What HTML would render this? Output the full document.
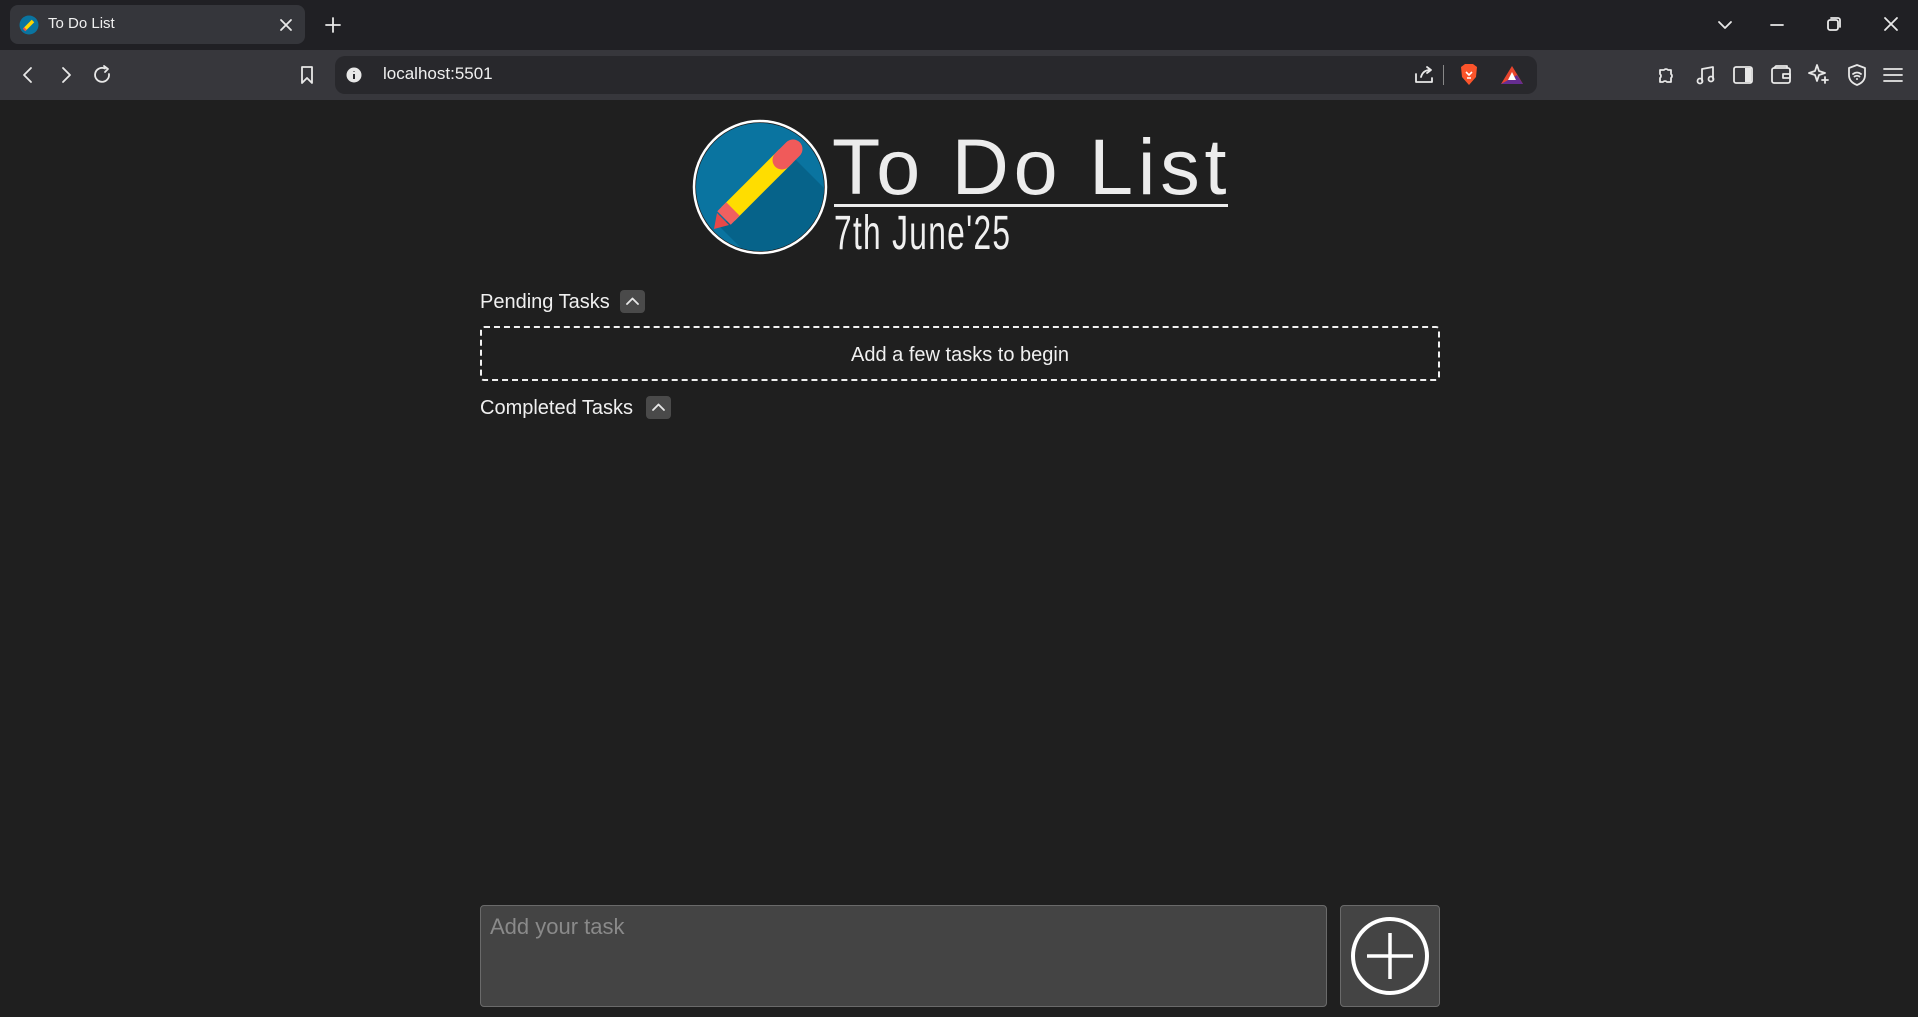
<!DOCTYPE html>
<html><head><meta charset="utf-8"><style>
*{margin:0;padding:0;box-sizing:border-box}
body{width:1918px;height:1017px;background:#1f1f1f;font-family:"Liberation Sans",sans-serif;color:#eee;position:relative;overflow:hidden}
.abs{position:absolute}
#tabbar{left:0;top:0;width:1918px;height:50px;background:#202024}
#tab{left:10px;top:5px;width:295px;height:39px;background:#35363b;border-radius:8px}
#toolbar{left:0;top:50px;width:1918px;height:50px;background:#37373c}
#url{left:335px;top:56px;width:1202px;height:38px;background:#28282c;border-radius:10px}
.ic{stroke:#e8e8e8;fill:none;stroke-width:1.8;stroke-linecap:round;stroke-linejoin:round}
.lbl{font-size:20px;color:#f0f0f0}
.chev{width:25px;height:23px;background:#4a4a4a;border-radius:4px}
</style></head><body>
<div id="tabbar" class="abs"></div>
<div id="tab" class="abs"></div>
<svg class="abs" style="left:19px;top:15px" width="20" height="20" viewBox="0 0 20 20"><circle cx="10" cy="10" r="9.5" fill="#0a74a0"/><path d="M6 14 L14 6" stroke="#ffd600" stroke-width="3.5"/><path d="M5 15 L6.5 13.5" stroke="#f05050" stroke-width="3.5"/></svg>
<div class="abs" style="left:48px;top:15px;font-size:15px;color:#f0f0f0">To Do List</div>
<svg class="abs" style="left:279px;top:18px" width="14" height="14"><path d="M2 2L12 12M12 2L2 12" class="ic" stroke-width="2"/></svg>
<svg class="abs" style="left:324px;top:16px" width="18" height="18"><path d="M9 2V16M2 9H16" class="ic"/></svg>
<svg class="abs" style="left:1716px;top:18px" width="18" height="14"><path d="M3 4L9 10L15 4" class="ic" stroke-width="2"/></svg>
<svg class="abs" style="left:1768px;top:18px" width="18" height="14"><path d="M3 7H15" class="ic" stroke-width="1.5"/></svg>
<svg class="abs" style="left:1826px;top:16px" width="16" height="16"><rect x="2" y="4" width="10" height="10" rx="2" class="ic" stroke-width="1.5"/><path d="M5 2H12a2 2 0 0 1 2 2V11" class="ic" stroke-width="1.5"/></svg>
<svg class="abs" style="left:1882px;top:15px" width="18" height="18"><path d="M3 3L15 15M15 3L3 15" class="ic" stroke-width="1.5"/></svg>
<div id="toolbar" class="abs"></div>
<svg class="abs" style="left:18px;top:65px" width="20" height="20"><path d="M13 3L6 10L13 17" class="ic" stroke-width="2"/></svg>
<svg class="abs" style="left:56px;top:65px" width="20" height="20"><path d="M7 3L14 10L7 17" class="ic" stroke="#888" stroke-width="2"/></svg>
<svg class="abs" style="left:92px;top:64px" width="22" height="22"><path d="M17 10A7 7 0 1 1 13 4.5" class="ic" stroke-width="2.2"/><path d="M12 2L16 5L13 8" class="ic" stroke-width="2"/></svg>
<svg class="abs" style="left:298px;top:64px" width="18" height="22"><path d="M4 3H14V19L9 14L4 19Z" class="ic"/></svg>
<div id="url" class="abs"></div>
<svg class="abs" style="left:346px;top:67px" width="16" height="16"><circle cx="8" cy="8" r="7.5" fill="#e8e8e8"/><path d="M8 7V12M8 4.5V5" stroke="#28282c" stroke-width="2"/></svg>
<div class="abs" style="left:383px;top:64px;font-size:17px;color:#f0f0f0">localhost:5501</div>
<svg class="abs" style="left:1413px;top:64px" width="22" height="22"><path d="M3 10V18H19V14M8 13Q10 6 17 6M14 3L18 6L14 9" class="ic" stroke="#bbb"/></svg>
<div class="abs" style="left:1443px;top:65px;width:1px;height:20px;background:#888"></div>
<svg class="abs" style="left:1458px;top:63px" width="22" height="24"><path d="M3 4L7 1H15L19 4L18 14L11 22L4 14Z" fill="#fb542b"/><path d="M8 9L11 12L14 9M9 15H13" stroke="#fff" stroke-width="1.6" fill="none"/></svg>
<svg class="abs" style="left:1500px;top:64px" width="24" height="22"><path d="M12 2L23 20H1Z" fill="#e8452e"/><path d="M1 20H23L17 11Z" fill="#662d91"/><path d="M12 8L16 16H8Z" fill="#fff"/></svg>
<svg class="abs" style="left:1655px;top:64px" width="22" height="22"><path d="M5 6H9A2.5 2.5 0 0 1 13 6H16V10A2.5 2.5 0 0 1 16 14V18H12A2.5 2.5 0 0 0 8 18H5V14A2.5 2.5 0 0 0 5 10Z" class="ic"/></svg>
<svg class="abs" style="left:1695px;top:64px" width="22" height="22"><path d="M7 17V5L18 3V15" class="ic"/><circle cx="5" cy="17" r="2.5" class="ic"/><circle cx="16" cy="15" r="2.5" class="ic"/></svg>
<svg class="abs" style="left:1732px;top:64px" width="22" height="22"><rect x="2" y="3" width="18" height="16" rx="2" class="ic"/><rect x="13" y="4" width="6" height="14" fill="#e8e8e8"/></svg>
<svg class="abs" style="left:1770px;top:64px" width="22" height="22"><rect x="2" y="4" width="18" height="15" rx="2" class="ic"/><path d="M4 4L6 2H17V4M13 10H20V14H13Z" class="ic"/></svg>
<svg class="abs" style="left:1808px;top:63px" width="22" height="22"><path d="M9 2L11 8L17 10L11 12L9 18L7 12L1 10L7 8Z" class="ic"/><path d="M17 14V20M14 17H20" class="ic"/></svg>
<svg class="abs" style="left:1846px;top:63px" width="22" height="24"><path d="M11 2L19 5V12Q19 19 11 22Q3 19 3 12V5Z" class="ic"/><path d="M7 11Q11 8 15 11M8.5 13.5Q11 12 13.5 13.5" class="ic"/><circle cx="11" cy="16" r="1" fill="#e8e8e8"/></svg>
<svg class="abs" style="left:1882px;top:64px" width="22" height="22"><path d="M2 5H20M2 11H20M2 17H20" class="ic"/></svg>

<!-- header -->
<svg class="abs" style="left:690px;top:117px" width="140" height="140" viewBox="0 0 140 140">
<defs><clipPath id="c"><circle cx="70" cy="70" r="64"/></clipPath></defs>
<circle cx="70" cy="70" r="66" fill="#1f1f1f" stroke="#fff" stroke-width="2.5"/>
<circle cx="70" cy="70" r="64" fill="#0a74a0"/>
<path d="M105 42 L140 77 L140 140 L60 140 L30 110 Z" fill="#06638a" clip-path="url(#c)"/>
<path d="M38 97 L96 39" stroke="#ffdd00" stroke-width="19"/>
<path d="M92 43 L103 32" stroke="#f05a5a" stroke-width="19" stroke-linecap="round"/>
<path d="M43 92 L34 101" stroke="#f06060" stroke-width="19"/>
<path d="M27 96 L39 108 L24 112 Z" fill="#e84848"/>
</svg>
<div class="abs" style="left:832px;top:117px;font-size:79px;line-height:100px;letter-spacing:4.8px;color:#ececec;white-space:nowrap">To Do List</div>
<div class="abs" style="left:834px;top:204px;width:394px;height:3px;background:#ececec"></div>
<div class="abs" style="left:834px;top:208px;font-size:48px;line-height:52px;color:#f0f0f0;transform:scaleX(0.66);transform-origin:left top;letter-spacing:2px">7th June'25</div>

<div class="abs lbl" style="left:480px;top:291px">Pending Tasks</div>
<div class="abs chev" style="left:620px;top:290px"></div>
<svg class="abs" style="left:620px;top:290px" width="25" height="23"><path d="M7 14L12.5 8.5L18 14" class="ic" stroke="#fff" stroke-width="2.2"/></svg>
<div class="abs" style="left:480px;top:326px;width:960px;height:55px;border:2px dashed #f0f0f0;border-radius:4px;text-align:center;line-height:55px;font-size:20px;color:#f0f0f0">Add a few tasks to begin</div>
<div class="abs lbl" style="left:480px;top:397px">Completed Tasks</div>
<div class="abs chev" style="left:646px;top:396px"></div>
<svg class="abs" style="left:646px;top:396px" width="25" height="23"><path d="M7 14L12.5 8.5L18 14" class="ic" stroke="#fff" stroke-width="2.2"/></svg>

<div class="abs" style="left:480px;top:905px;width:847px;height:102px;background:#444;border:1px solid #6a6a6a;border-radius:4px"></div>
<div class="abs" style="left:490px;top:914px;font-size:22px;color:#8a8a8a">Add your task</div>
<div class="abs" style="left:1340px;top:905px;width:100px;height:102px;background:#444;border:1px solid #6a6a6a;border-radius:4px"></div>
<svg class="abs" style="left:1349px;top:915px" width="82" height="82"><circle cx="41" cy="41" r="37" fill="none" stroke="#fff" stroke-width="4"/><path d="M41 18V64M18 41H64" stroke="#fff" stroke-width="3.5"/></svg>
</body></html>
